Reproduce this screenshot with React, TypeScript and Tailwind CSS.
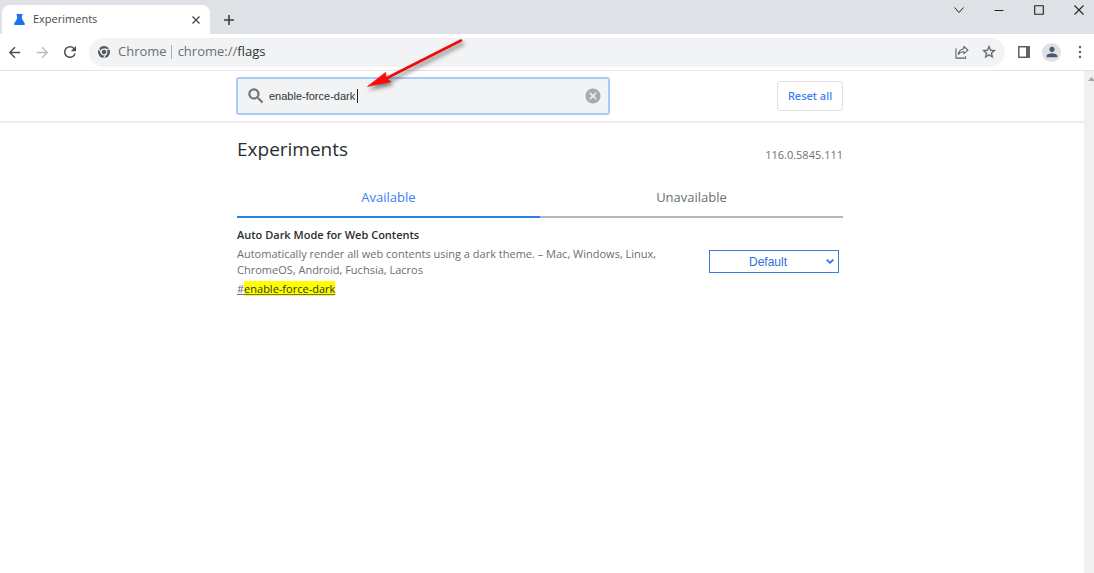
import { useState } from "react";
import type { ReactNode } from "react";

function Icon({ className, children }: { className: string; children: ReactNode }) {
  return (
    <svg viewBox="0 0 24 24" fill="currentColor" aria-hidden="true" className={className}>
      {children}
    </svg>
  );
}

function TabStrip() {
  return (
    <div className="flex h-[34px] items-end justify-between bg-[#dee1e6]">
      <div className="flex h-full items-end pl-0.5">
        <div className="flex h-[29px] w-[208px] items-center rounded-t-lg bg-white pr-1.5 pl-3">
          <svg viewBox="0 0 12 12" className="h-[11px] w-[11px] text-[#1a73e8]" fill="currentColor" aria-hidden="true">
            <path d="M2.800 0h6.400v1.500H8.600v3.300l3 5.200c.6 1 .2 2-1 2H1.400c-1.200 0-1.600-1-1-2l3-5.200V1.500h-.6z" />
          </svg>
          <span className="ml-2 flex-1 text-[11px] text-[#45494d]">Experiments</span>
          <button aria-label="Close tab" className="flex h-4 w-4 items-center justify-center text-[#45494d]">
            <svg viewBox="0 0 8 8" className="h-2 w-2" stroke="currentColor" strokeWidth="1.400" aria-hidden="true">
              <path d="M.5.500l7 7M7.500.500l-7 7" />
            </svg>
          </button>
        </div>
        <button aria-label="New tab" className="ml-[11px] flex h-[29px] w-4 items-center justify-center text-[#3c4043]">
          <svg viewBox="0 0 10 10" className="h-2.5 w-2.5" stroke="currentColor" strokeWidth="1.600" aria-hidden="true">
            <path d="M5 0v10M0 5h10" />
          </svg>
        </button>
      </div>
      <div className="flex h-full gap-[30px] pt-[5px] pr-2.5 text-[#202124]">
        <button aria-label="Search tabs" className="flex h-2.5 w-2.5 items-center justify-center">
          <svg viewBox="0 0 10 10" className="h-2.5 w-2.5" fill="none" stroke="currentColor" strokeWidth="1" aria-hidden="true">
            <path d="M.5 2.500L5 7.500l4.500-5" />
          </svg>
        </button>
        <button aria-label="Minimize" className="flex h-2.5 w-2.5 items-center justify-center">
          <svg viewBox="0 0 10 10" className="h-2.5 w-2.5" stroke="currentColor" aria-hidden="true">
            <path d="M.5 5.500h9" />
          </svg>
        </button>
        <button aria-label="Maximize" className="flex h-2.5 w-2.5 items-center justify-center">
          <svg viewBox="0 0 10 10" className="h-2.5 w-2.5" fill="none" stroke="currentColor" strokeWidth="1.100" aria-hidden="true">
            <path d="M.7.700h8.600v8.600H.7z" />
          </svg>
        </button>
        <button aria-label="Close window" className="flex h-2.5 w-2.5 items-center justify-center">
          <svg viewBox="0 0 10 10" className="h-2.5 w-2.5" stroke="currentColor" strokeWidth="1.100" aria-hidden="true">
            <path d="M.5.500l9 9M9.500.500l-9 9" />
          </svg>
        </button>
      </div>
    </div>
  );
}

function Toolbar() {
  return (
    <div className="flex h-[37px] items-center border-b border-[#e4e5e7] bg-white pl-1.5 text-[#5f6368]">
      <button aria-label="Back">
        <Icon className="h-[17px] w-[17px] text-[#4b4f53]">
          <path d="M20 11H7.830l5.590-5.590L12 4l-8 8 8 8 1.410-1.410L7.830 13H20v-2z" />
        </Icon>
      </button>
      <button aria-label="Forward" className="ml-[11px]">
        <Icon className="h-[17px] w-[17px] text-[#babcbe]">
          <path d="M12 4l-1.410 1.410L16.170 11H4v2h12.170l-5.580 5.590L12 20l8-8z" />
        </Icon>
      </button>
      <button aria-label="Reload" className="ml-2.5">
        <Icon className="h-[18px] w-[18px] text-[#4b4f53]">
          <path d="M17.650 6.350A7.958 7.958 0 0 0 12 4a8 8 0 1 0 7.730 10h-2.080A5.990 5.990 0 0 1 12 18c-3.310 0-6-2.690-6-6s2.690-6 6-6c1.660 0 3.140.69 4.220 1.780L13 11h7V4l-2.350 2.350z" />
        </Icon>
      </button>
      <div className="ml-2.5 flex h-[29px] flex-1 items-center rounded-full bg-[#f1f3f4] pr-2 pl-[9px]">
        <svg viewBox="0 0 24 24" className="h-3 w-3" aria-hidden="true">
          <circle cx="12" cy="12" r="12" fill="#54585c" />
          <g stroke="#f1f3f4" strokeWidth="2.200" fill="none">
            <path d="M12 6.500h11M7.200 14.800L1.700 5.200M16.800 14.800L11.300 24" />
            <circle cx="12" cy="12" r="5.800" />
          </g>
        </svg>
        <span className="ml-2 text-[13px] text-[#6b6f73]">Chrome</span>
        <span className="mr-1.5 ml-1 h-3.5 w-px bg-[#a9acaf]" />
        <span className="flex-1 text-[13px] text-[#6b6f73]">
          chrome://<span className="text-[#303336]">flags</span>
        </span>
        <button aria-label="Share">
          <svg viewBox="0 0 14 14" className="h-3.5 w-3.5" fill="none" stroke="currentColor" strokeWidth="1.100" aria-hidden="true">
            <path d="M1 3.500v9.600h9.500v-1.800" />
            <path d="M8.800 1.500L13 5.100 8.800 8.700V6.800c-2.700 0-4.300.8-5.500 2.600.4-2.900 2.100-5.200 5.500-5.700z" strokeLinejoin="round" />
          </svg>
        </button>
        <button aria-label="Bookmark this tab" className="ml-3">
          <Icon className="h-4 w-4">
            <path d="M22 9.240l-7.190-.62L12 2 9.190 8.630 2 9.240l5.460 4.730L5.820 21 12 17.270 18.180 21l-1.630-7.030L22 9.240zM12 15.400l-3.760 2.270 1-4.280-3.320-2.880 4.380-.38L12 6.100l1.710 4.040 4.380.38-3.320 2.880 1 4.280L12 15.400z" stroke="currentColor" strokeWidth=".4" />
          </Icon>
        </button>
      </div>
      <button aria-label="Side panel" className="ml-[13px]">
        <svg viewBox="0 0 12 12" className="h-3 w-3" aria-hidden="true">
          <path d="M.75.750h10.500v10.500H.75z" fill="none" stroke="currentColor" strokeWidth="1.500" />
          <path d="M8 0h4v12H8z" fill="currentColor" />
        </svg>
      </button>
      <button aria-label="Profile" className="ml-3 flex h-[19px] w-[19px] items-center justify-center rounded-full bg-[#dee1e6]">
        <Icon className="h-4 w-4 text-[#4a5a73]">
          <path d="M12 12c2.210 0 4-1.790 4-4s-1.790-4-4-4-4 1.790-4 4 1.790 4 4 4zm0 2c-2.670 0-8 1.340-8 4v2h16v-2c0-2.660-5.330-4-8-4z" />
        </Icon>
      </button>
      <button aria-label="Menu" className="mr-[5px] ml-2.5">
        <Icon className="h-[18px] w-[18px]">
          <circle cx="12" cy="5.300" r="1.700" />
          <circle cx="12" cy="12" r="1.700" />
          <circle cx="12" cy="18.700" r="1.700" />
        </Icon>
      </button>
    </div>
  );
}

function SearchHeader() {
  const [query, setQuery] = useState("enable-force-dark");
  return (
    <header className="relative border-b-2 border-[#ececee] py-1.5 pr-1">
      <div className="mx-auto flex w-full max-w-[608px] items-center justify-between pr-px">
        <div className="flex h-[38px] w-[374px] items-center rounded-[3px] border-2 border-[#a9cbf8] bg-[#f1f3f4] pr-1.5 pl-2">
          <Icon className="h-5 w-5 text-[#6b6f73]">
            <path
              d="M15.500 14h-.79l-.28-.27A6.471 6.471 0 0 0 16 9.500 6.500 6.500 0 1 0 9.500 16c1.610 0 3.090-.59 4.230-1.570l.27.280v.79l5 4.990L20.490 19l-4.990-5zm-6 0C7.010 14 5 11.990 5 9.500S7.010 5 9.500 5 14 7.010 14 9.500 11.990 14 9.500 14z"
              stroke="currentColor"
              strokeWidth=".5"
            />
          </Icon>
          <div className="relative ml-[3px] flex-1">
            <input
              aria-label="Search flags"
              value={query}
              onChange={(e) => setQuery(e.target.value)}
              className="block h-[18px] w-full bg-transparent font-['Liberation_Sans',sans-serif] text-[11px] text-[#303336] outline-none"
            />
            <span className="absolute top-0.5 left-[88px] h-3.5 w-px bg-[#202124]" />
          </div>
          <button aria-label="Clear search" onClick={() => setQuery("")}>
            <Icon className="h-[18px] w-[18px] text-[#a8aaad]">
              <path d="M12 2C6.470 2 2 6.470 2 12s4.470 10 10 10 10-4.470 10-10S17.530 2 12 2zm5 13.590L15.590 17 12 13.410 8.410 17 7 15.590 10.590 12 7 8.410 8.410 7 12 10.590 15.590 7 17 8.410 13.410 12 17 15.590z" />
            </Icon>
          </button>
        </div>
        <button className="h-[30px] w-[66px] rounded-[3px] border border-[#dddfe3] font-['Noto_Sans',sans-serif] text-[11px] font-medium text-[#3b7ded]">
          Reset all
        </button>
      </div>
      <svg
        viewBox="0 0 110 60"
        aria-hidden="true"
        className="pointer-events-none absolute -top-9 left-[360px] h-[60px] w-[110px] drop-shadow-[2px_3px_2px_rgba(0,0,0,0.5)]"
      >
        <path d="M101 5.500L26 43.500" stroke="#f00c0c" strokeWidth="2.600" strokeLinecap="round" />
        <path d="M7.500 51.500L25.700 37.300 26 43 31 46.800z" fill="#ff0808" stroke="#ff0808" strokeWidth=".6" />
      </svg>
    </header>
  );
}

export default function App() {
  return (
    <div className="flex min-h-screen flex-col bg-white font-['Open_Sans',sans-serif]">
      <TabStrip />
      <Toolbar />
      <div className="flex flex-1">
        <div className="flex-1">
          <SearchHeader />
          <main className="pr-1">
            <div className="mx-auto w-full max-w-[606px]">
              <div className="flex items-end justify-between pt-3">
                <h1 className="text-[19px] leading-7 text-[#2b2e31]">Experiments</h1>
                <span className="text-[11px] leading-4 text-[#6b6f73]">116.0.5845.111</span>
              </div>
              <div role="tablist" className="mt-4 flex text-[13px]">
                <button role="tab" aria-selected="true" className="h-[39px] flex-1 border-b-2 border-[#2f7de9] text-[#3b7ded]">
                  Available
                </button>
                <button role="tab" aria-selected="false" className="h-[39px] flex-1 border-b-2 border-[#b4b7ba] text-[#6b6f73]">
                  Unavailable
                </button>
              </div>
              <section className="flex items-start justify-between pt-[9px] pr-1">
                <div className="w-[420px] text-[11px] leading-4 text-[#6b6f73]">
                  <h2 className="font-semibold text-[#2b2e31]">Auto Dark Mode for Web Contents</h2>
                  <p className="mt-[3px]">
                    Automatically render all web contents using a dark theme. – Mac, Windows, Linux, ChromeOS, Android,
                    Fuchsia, Lacros
                  </p>
                  <a href="#enable-force-dark" className="mt-[3px] block underline">
                    #<mark className="bg-[#ffff00] text-[#303336]">enable-force-dark</mark>
                  </a>
                </div>
                <div className="relative mt-[23px]">
                  <select
                    aria-label="Auto Dark Mode for Web Contents"
                    className="block h-[23px] w-[130px] appearance-none border border-[#3b7ddd] bg-white pr-3 text-center font-['Liberation_Sans',sans-serif] text-[12px] text-[#2f6fdc]"
                  >
                    <option>Default</option>
                    <option>Enabled</option>
                    <option>Disabled</option>
                  </select>
                  <svg viewBox="0 0 8 5" aria-hidden="true" className="pointer-events-none absolute top-[9px] right-[5px] h-[5px] w-2" fill="none" stroke="#2f6fdc" strokeWidth="1.800">
                    <path d="M.7.700L4 3.800 7.300.700" />
                  </svg>
                </div>
              </section>
            </div>
          </main>
        </div>
        <div className="flex w-2.5 justify-end bg-[#f0f0f0] pt-1.5">
          <svg viewBox="0 0 6 4" className="h-1 w-1.5" fill="#a3a3a3" aria-hidden="true">
            <path d="M0 4L3.500 0 6 3v1z" />
          </svg>
        </div>
      </div>
    </div>
  );
}
